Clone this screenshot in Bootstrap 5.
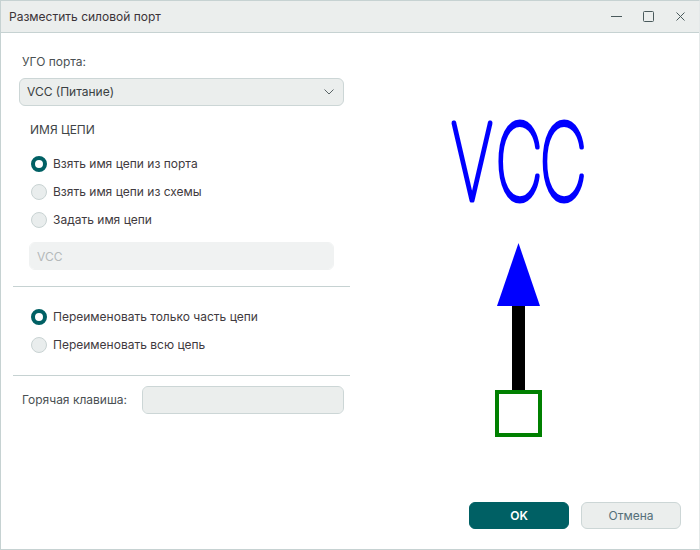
<!DOCTYPE html>
<html lang="ru">
<head>
<meta charset="utf-8">
<title>Разместить силовой порт</title>
<link href="https://cdn.jsdelivr.net/npm/bootstrap@5.3.0/dist/css/bootstrap.min.css" rel="stylesheet">
<style>
html,body{height:100%;margin:0;background:#fff}
body{font-family:Inter,"Noto Sans",sans-serif;font-size:12px;color:#3a3f42}
.win{width:700px;height:550px;border:1px solid #c6d2d2;border-right-color:#e4e9e9}
.titlebar{height:32px;background:#ebeeed;border-bottom:1px solid #c6d2d2;padding:0 13px 0 8px;flex:none}
.titlebar .ttl{color:#3b3338;font-size:12px;line-height:32px}
.wbtns{gap:21px}
.leftcol{width:350px;flex:none;padding:19px 0 0 12px}
.rightcol{flex:1 1 auto;min-width:0}
.lbl{color:#4a5053;line-height:20px;padding-left:9px;margin-bottom:6px}
.fld.form-select,.fld.form-control{height:28px;min-height:0;font-size:12px;border-radius:6px;background-color:#ebeeed;border:1px solid #ccd6d6;color:#3a3f42;padding:0 30px 0 7px;box-shadow:none}
.fld.form-select{width:325px;margin-left:6px;background-image:url("data:image/svg+xml,%3csvg xmlns='http://www.w3.org/2000/svg' viewBox='0 0 10 6'%3e%3cpath fill='none' stroke='%235a6466' stroke-width='1' d='M.5.5L5 5 9.500.5'/%3e%3c/svg%3e");background-size:10px 6px;background-position:right 9px center}
.secttl{color:#3f4548;line-height:20px;margin:14px 0 0 17px}
.radios{margin:14px 0 0 18px;display:flex;flex-direction:column;gap:8px}
.radios .form-check{min-height:20px;line-height:20px;padding-left:22px;margin:0}
.radios .form-check-input{width:16px;height:16px;margin:2px 0 0 -22px;background-color:#e9eded;border:1px solid #c9d3d3;box-shadow:none;opacity:1}
.radios .form-check-input:checked{background-color:#fff;background-image:none;border:4px solid #006064}
.radios .form-check-label{color:#3f3a40;opacity:1}
.netname.form-control{width:305px;margin:12px 0 0 16px;background-color:#f0f2f2;border-color:#f0f2f2;color:#b4b9ba}
.sep{height:1px;background:#c6d2d2;margin:0;width:337px}
.s1{margin-top:16px}
.s2{margin-top:20px}
.radios2{margin-top:20px}
.hotrow{margin-top:10px}
.hotrow .hotlbl{width:129px;padding-left:9px;color:#4a5053;flex:none}
.hotrow .fld.form-control{width:202px}
.foot{padding:0 18px 20px 0;gap:12px;flex:none}
.dbtn.btn{width:100px;height:27px;padding:0;font-size:12px;border-radius:6px;line-height:25px}
.btn-ok.btn{background:#006064;border-color:#006064;color:#fff;font-weight:600}
.btn-no.btn{background:#ebeeed;border-color:#ccd6d6;color:#55707a}
.vcc{font-family:Inter,"Liberation Sans",sans-serif;font-weight:100;font-size:106px;fill:#0000ff;stroke:#0000ff;stroke-width:5px;stroke-linejoin:round;stroke-linecap:round}
.sym{display:block}
</style>
</head>
<body>
<div class="win d-flex flex-column">
  <div class="titlebar d-flex align-items-center justify-content-between">
    <span class="ttl">Разместить силовой порт</span>
    <div class="wbtns d-flex align-items-center">
      <svg width="11" height="11" viewBox="0 0 11 11"><path d="M0 5.500H11" stroke="#4a5a5c" stroke-width="1"/></svg>
      <svg width="11" height="11" viewBox="0 0 11 11"><rect x=".5" y=".5" width="10" height="10" rx="1" fill="none" stroke="#4a5a5c" stroke-width="1"/></svg>
      <svg width="11" height="11" viewBox="0 0 11 11"><path d="M1.500 1.500l8 8M9.500 1.500l-8 8" stroke="#4a5a5c" stroke-width="1"/></svg>
    </div>
  </div>
  <div class="d-flex flex-grow-1">
    <div class="leftcol">
      <div class="lbl">УГО порта:</div>
      <select class="form-select fld"><option>VCC (Питание)</option></select>
      <div class="secttl">ИМЯ ЦЕПИ</div>
      <div class="radios">
        <div class="form-check"><input class="form-check-input" type="radio" name="a" id="a1" checked><label class="form-check-label" for="a1">Взять имя цепи из порта</label></div>
        <div class="form-check"><input class="form-check-input" type="radio" name="a" id="a2"><label class="form-check-label" for="a2">Взять имя цепи из схемы</label></div>
        <div class="form-check"><input class="form-check-input" type="radio" name="a" id="a3"><label class="form-check-label" for="a3">Задать имя цепи</label></div>
      </div>
      <input class="form-control fld netname" type="text" value="VCC">
      <div class="sep s1"></div>
      <div class="radios radios2">
        <div class="form-check"><input class="form-check-input" type="radio" name="b" id="b1" checked><label class="form-check-label" for="b1">Переименовать только часть цепи</label></div>
        <div class="form-check"><input class="form-check-input" type="radio" name="b" id="b2"><label class="form-check-label" for="b2">Переименовать всю цепь</label></div>
      </div>
      <div class="sep s2"></div>
      <div class="hotrow d-flex align-items-center">
        <span class="hotlbl">Горячая клавиша:</span>
        <input class="form-control fld" type="text">
      </div>
    </div>
    <div class="rightcol">
      <svg class="sym" width="349" height="430" viewBox="351 33 349 430">
        <text class="vcc" x="451" y="200" dx="0 7 -5" textLength="136" lengthAdjust="spacingAndGlyphs">VCC</text>
        <path d="M518.500 243L540 306H497Z" fill="#0000ff"/>
        <rect x="512" y="306" width="13" height="85" fill="#000"/>
        <rect x="497" y="392" width="43" height="43" fill="#fff" stroke="#008000" stroke-width="4"/>
      </svg>
    </div>
  </div>
  <div class="foot d-flex justify-content-end">
    <button class="btn dbtn btn-ok" type="button">OK</button>
    <button class="btn dbtn btn-no" type="button">Отмена</button>
  </div>
</div>
<script src="https://cdn.jsdelivr.net/npm/bootstrap@5.3.0/dist/js/bootstrap.bundle.min.js"></script>
</body>
</html>
